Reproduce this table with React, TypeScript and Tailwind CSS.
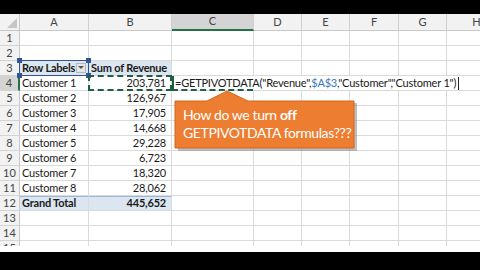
import React from "react";

const cols = [
  { key: "A", w: 69 },
  { key: "B", w: 83 },
  { key: "C", w: 82 },
  { key: "D", w: 48 },
  { key: "E", w: 48 },
  { key: "F", w: 49 },
  { key: "G", w: 48 },
  { key: "H", w: 60 },
];

const customers: [string, string][] = [
  ["Customer 1", "203,781"],
  ["Customer 2", "126,967"],
  ["Customer 3", "17,905"],
  ["Customer 4", "14,668"],
  ["Customer 5", "29,228"],
  ["Customer 6", "6,723"],
  ["Customer 7", "18,320"],
  ["Customer 8", "28,062"],
];

const font = { fontFamily: "Lato, 'Open Sans', sans-serif" };
const txt = "text-[11px] tracking-[-0.2px] text-[#1a1a1a] whitespace-nowrap";

function RowHeader({ n, active }: { n: number; active?: boolean }) {
  return (
    <div
      className={
        "w-[20px] shrink-0 h-full flex items-center justify-center text-[11px] text-[#444] border-b border-[#d4d4d4] " +
        (active
          ? "bg-[#d4d4d4] border-r-2 border-r-[#217346]"
          : "bg-[#f2f2f2] border-r border-r-[#c8c8c8]")
      }
    >
      {n}
    </div>
  );
}

function Cell({
  w,
  children,
  className = "",
}: {
  w: number;
  children?: React.ReactNode;
  className?: string;
}) {
  return (
    <div
      className={"shrink-0 h-full border-r border-b border-[#dadada] flex items-center " + className}
      style={{ width: w }}
    >
      {children}
    </div>
  );
}

function EmptyCells({ from }: { from: number }) {
  return (
    <>
      {cols.slice(from).map((c) => (
        <Cell key={c.key} w={c.w} />
      ))}
    </>
  );
}

export default function App() {
  const rows: React.ReactNode[] = [];

  for (let r = 1; r <= 15; r++) {
    let content: React.ReactNode;
    if (r === 1 || r === 2 || r >= 13) {
      content = <EmptyCells from={0} />;
    } else if (r === 3) {
      content = (
        <>
          <Cell w={69} className="bg-[#dce6f1] relative font-bold">
            <div className="absolute -left-px -top-px -right-px -bottom-px border border-[#2f5597]" />
            <div className="absolute -left-[3px] -top-[3px] w-[5px] h-[5px] bg-[#2f5597]" />
            <div className="absolute -right-[3px] -top-[3px] w-[5px] h-[5px] bg-[#2f5597]" />
            <div className="absolute -left-[3px] -bottom-[3px] w-[5px] h-[5px] bg-[#2f5597]" />
            <div className="absolute -right-[3px] -bottom-[3px] w-[5px] h-[5px] bg-[#2f5597]" />
            <span className={"pl-[2px] " + txt}>Row Labels</span>
            <div className="absolute right-[2px] top-[2px] w-[10px] h-[10px] bg-[#e6e6e6] border border-[#b8b8b8] flex items-center justify-center">
              <svg width="6" height="4" viewBox="0 0 6 4">
                <path d="M0 0 L6 0 L3 3 Z" fill="#555" />
              </svg>
            </div>
          </Cell>
          <Cell w={83} className="bg-[#dce6f1] font-bold">
            <span className={"pl-[2px] " + txt}>Sum of Revenue</span>
          </Cell>
          <EmptyCells from={2} />
        </>
      );
    } else if (r >= 4 && r <= 11) {
      const [name, val] = customers[r - 4];
      content = (
        <>
          <Cell w={69}>
            <span className={"pl-[2px] " + txt}>{name}</span>
          </Cell>
          <Cell w={83} className="justify-end relative">
            {r === 4 && (
              <div className="absolute -left-px -top-px -right-px -bottom-px border-2 border-dashed border-[#1f5d45]" />
            )}
            <span className={"pr-[5px] " + txt}>{val}</span>
          </Cell>
          {r === 4 ? (
            <>
              <Cell w={82} className="relative">
                <div className="absolute left-0 top-0 bottom-0 w-[2px] bg-[#1f5d45] z-20" />
                <div className="absolute left-0 right-0 -bottom-px h-[2px] border-b-2 border-dashed border-[#1f5d45] z-20" />
                <div className={"absolute left-0 top-0 bottom-0 bg-white z-10 flex items-center pl-[3px] pr-[2px] " + txt}>
                  <span>=GETPIVOTDATA(&quot;Revenue&quot;,</span>
                  <span className="text-[#3a78c3]">$A$3</span>
                  <span>,&quot;Customer&quot;,&quot;Customer 1&quot;)</span>
                  <span className="inline-block w-px h-[13px] bg-[#222] ml-[2px]" />
                </div>
              </Cell>
              <EmptyCells from={3} />
            </>
          ) : (
            <EmptyCells from={2} />
          )}
        </>
      );
    } else if (r === 12) {
      content = (
        <>
          <Cell w={69} className="bg-[#dce6f1] font-bold border-t border-t-[#9bb7dd]">
            <span className={"pl-[2px] " + txt}>Grand Total</span>
          </Cell>
          <Cell w={83} className="bg-[#dce6f1] font-bold justify-end border-t border-t-[#9bb7dd]">
            <span className={"pr-[5px] " + txt}>445,652</span>
          </Cell>
          <EmptyCells from={2} />
        </>
      );
    }
    rows.push(
      <div key={r} className="flex h-[15px]">
        <RowHeader n={r} active={r === 4} />
        {content}
      </div>
    );
  }

  return (
    <div className="w-[480px] h-[270px] bg-black flex flex-col overflow-hidden" style={font}>
      <div className="h-[14px] shrink-0 bg-black" />
      <div className="h-[238px] shrink-0 bg-white overflow-hidden relative">
        <div className="flex h-[17px]">
          <div className="w-[20px] shrink-0 bg-[#f2f2f2] border-r border-b border-[#c8c8c8] relative">
            <svg className="absolute right-[2px] bottom-[2px]" width="10" height="10" viewBox="0 0 10 10">
              <path d="M10 0 L10 10 L0 10 Z" fill="#c6c6c6" />
            </svg>
          </div>
          {cols.map((c) => (
            <div
              key={c.key}
              className={
                "shrink-0 h-full flex items-center justify-center text-[11px] text-[#444] border-r border-r-[#d0d0d0] " +
                (c.key === "C"
                  ? "bg-[#d4d4d4] border-b-2 border-b-[#217346]"
                  : "bg-[#f2f2f2] border-b border-b-[#c8c8c8]")
              }
              style={{ width: c.w }}
            >
              {c.key}
            </div>
          ))}
        </div>
        {rows}
        <div className="absolute left-0 right-0 bottom-0 h-[6px] bg-white" />

        {/* Callout */}
        <div className="absolute left-[172px] top-[76px] w-[188px] h-[62px]">
          <svg className="absolute inset-0" width="188" height="62" viewBox="0 0 188 62">
            <path
              d="M6 13 L36 13 L55 3 L76 13 L185 13 L185 61 L6 61 Z"
              fill="#8a8a8a"
              opacity="0.55"
            />
            <path
              d="M3 11 L35 11 L55 1 L76 11 L182 11 L182 58 L3 58 Z"
              fill="#ed7d31"
              stroke="#d0661e"
              strokeWidth="1"
            />
          </svg>
          <div className="absolute left-[11px] top-[16px] text-white text-[14px] leading-[18px] tracking-[-0.4px] whitespace-nowrap">
            <div>
              How do we turn <span className="font-bold">off</span>
            </div>
            <div>GETPIVOTDATA formulas???</div>
          </div>
        </div>
      </div>
      <div className="flex-1 bg-black" />
    </div>
  );
}
